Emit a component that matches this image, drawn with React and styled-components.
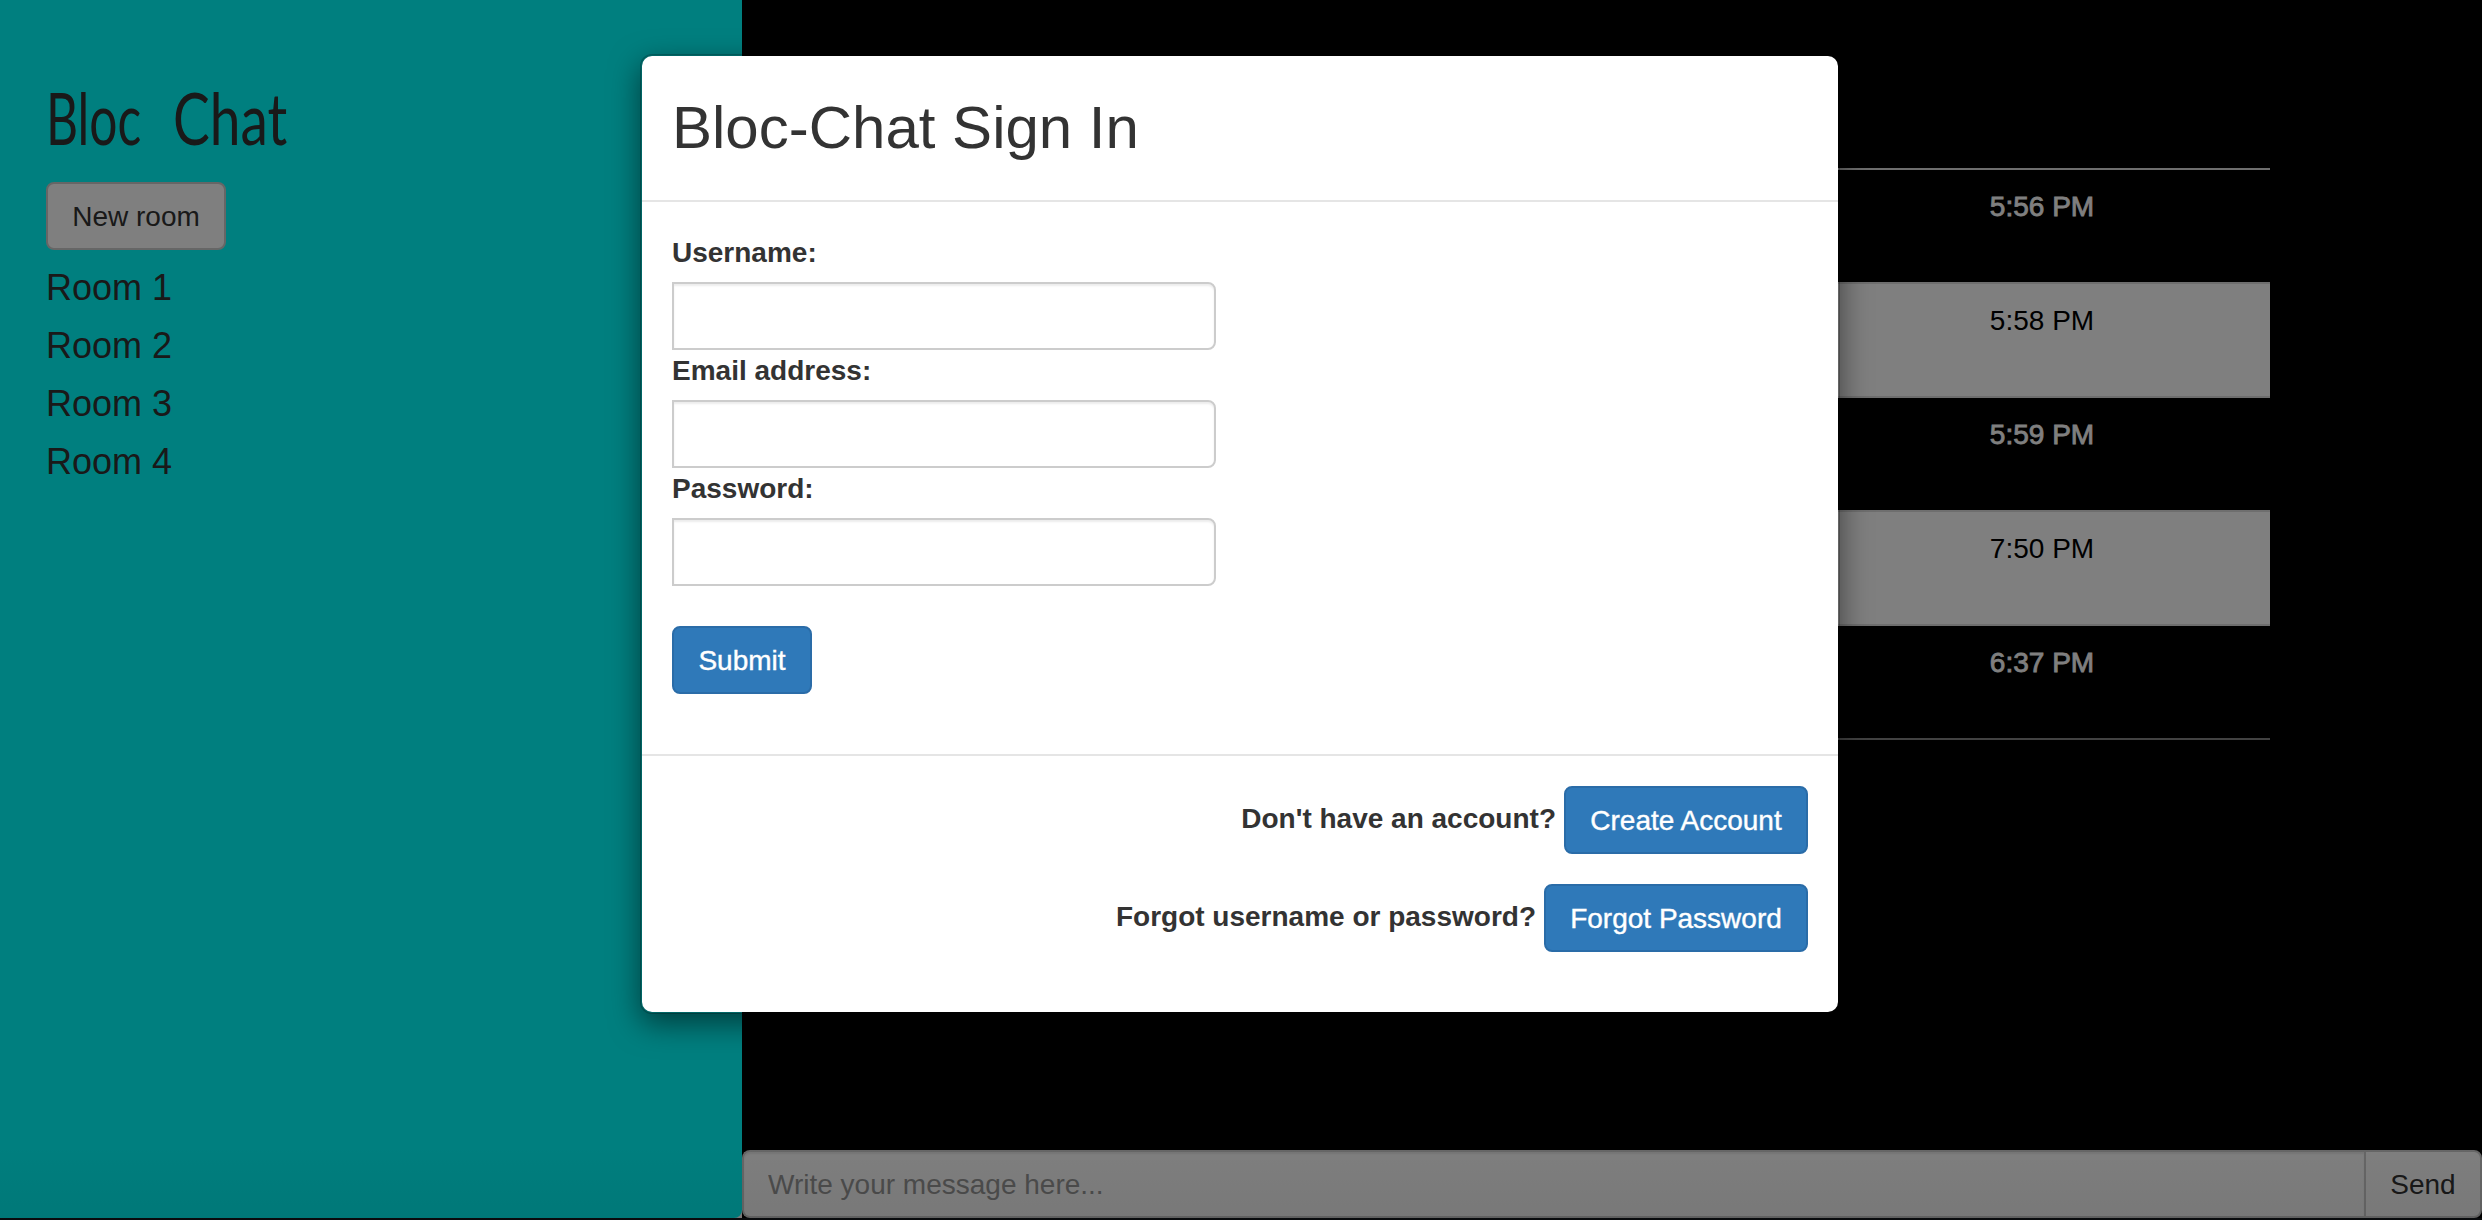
import React from 'react';
import styled, { createGlobalStyle } from 'styled-components';

const Global = createGlobalStyle`
  *, *::before, *::after { box-sizing: border-box; }
  html, body { margin: 0; background: #000; overflow: hidden; }
  body {
    font-family: "Liberation Sans", Arial, sans-serif;
    font-size: 28px;
    line-height: 40px;
    color: #333;
  }
`;

const Page = styled.div`
  position: relative;
  display: flex;
  flex-direction: column;
  height: 1220px;
  background: #14181c;
`;

const Shell = styled.div`
  display: flex;
  height: 1218px;
  background: #fff;
`;

const Sidebar = styled.aside`
  width: 742px;
  padding: 77px 46px 0;
  background: #0ff;
  border-radius: 0 0 8px 0;
`;

const Brand = styled.h1`
  display: flex;
  margin: 0 0 25px;
  height: 80px;
  font: 400 72px/80px Lato, sans-serif;
  white-space: nowrap;
`;

const Word = styled.span`
  width: ${p => p.$width}px;
  transform: scaleX(${p => p.$scale});
  transform-origin: left center;
`;

const Button = styled.button`
  display: inline-block;
  height: 68px;
  padding: 13px 24px 11px;
  border: 2px solid ${p => (p.$primary ? '#2a6ca8' : '#ccc')};
  border-radius: 8px;
  background: ${p => (p.$primary ? '#2f79b9' : '#fff')};
  color: ${p => (p.$primary ? '#fff' : '#333')};
  font: inherit;
  white-space: nowrap;
  ${p => p.$primary && '-webkit-text-stroke: 0.4px currentColor;'}
  ${p => p.$width && `width: ${p.$width}px; padding-inline: 0;`}
`;

const Rooms = styled.ul`
  list-style: none;
  margin: 9px 0 0;
  padding: 0;
`;

const Room = styled.li`
  font-size: 36px;
  line-height: 58px;
`;

const Main = styled.main`
  display: flex;
  flex: 1;
  flex-direction: column;
  background: #000;
`;

const Messages = styled.div`
  flex: 1;
  margin: 168px 212px 0 150px;
`;

const Message = styled.div`
  display: grid;
  grid-template-columns: 1fr 456px;
  height: ${p => (p.$light ? 116 : 112)}px;
  padding-top: 17px;
  border: solid #ddd;
  border-width: ${p => (p.$light ? '2px 0' : '0')};
  background: ${p => (p.$light ? '#fff' : '#000')};
  color: ${p => (p.$light ? '#000' : '#fff')};
`;

const Time = styled.time`
  grid-column: 2;
  text-align: center;
  -webkit-text-stroke: ${p => (p.$bold ? '0.8px' : '0')} currentColor;
`;

const Rule = styled.div`
  height: 2px;
  background: ${p => p.$color};
`;

const Composer = styled.div`
  display: flex;
  height: 68px;
`;

const MessageInput = styled.input`
  flex: 1;
  min-width: 0;
  height: 68px;
  padding: 13px 24px 11px;
  border: 2px solid #ccc;
  border-right: 0;
  border-radius: 8px 0 0 8px;
  box-shadow: inset 0 2px 2px rgba(0, 0, 0, 0.075);
  background: #fff;
  font: inherit;
  &::placeholder { color: #999; opacity: 1; }
`;

const SendButton = styled(Button)`
  border-radius: 0 8px 8px 0;
`;

const Backdrop = styled.div`
  position: absolute;
  inset: 0;
  display: flex;
  justify-content: center;
  align-items: flex-start;
  padding: 54px 2px 0 0;
  background: linear-gradient(transparent 1145px, rgba(0, 0, 0, 0.06) 1220px), rgba(0, 0, 0, 0.5);
`;

const Dialog = styled.section`
  width: 1200px;
  height: 960px;
  border: 2px solid rgba(0, 0, 0, 0.2);
  border-radius: 12px;
  background: #fff;
  background-clip: padding-box;
  box-shadow: 0 10px 30px rgba(0, 0, 0, 0.5);
`;

const DialogHeader = styled.header`
  height: 146px;
  padding: 39px 30px 0;
  border-bottom: 2px solid #e5e5e5;
`;

const Title = styled.h2`
  margin: 0;
  font-size: 60px;
  line-height: 66px;
  font-weight: 400;
`;

const Form = styled.form`
  display: flex;
  flex-direction: column;
  align-items: flex-start;
  height: 552px;
  padding: 30px;
`;

const Label = styled.label`
  height: 50px;
  padding-top: 1px;
  font-weight: 700;
`;

const Field = styled.input`
  width: 544px;
  height: 68px;
  padding: 12px 24px;
  border: 2px solid #ccc;
  border-radius: 0 8px 8px 0;
  box-shadow: inset 0 2px 2px rgba(0, 0, 0, 0.075);
  background: #fff;
  font: inherit;
`;

const Submit = styled(Button)`
  margin-top: 40px;
`;

const DialogFooter = styled.footer`
  display: flex;
  flex-direction: column;
  gap: 30px;
  padding: 30px;
  border-top: 2px solid #e5e5e5;
`;

const Action = styled.div`
  display: flex;
  justify-content: flex-end;
  gap: 8px;
`;

const Prompt = styled.strong`
  line-height: 66px;
`;

const rooms = ['Room 1', 'Room 2', 'Room 3', 'Room 4'];
const times = ['5:56 PM', '5:58 PM', '5:59 PM', '7:50 PM', '6:37 PM'];
const fields = [['Username:', 'text'], ['Email address:', 'email'], ['Password:', 'password']];
const actions = [
  ["Don't have an account?", 'Create Account', 244],
  ['Forgot username or password?', 'Forgot Password', 264],
];

export default function App() {
  return (
    <>
      <Global />
      <Page>
        <Shell>
          <Sidebar>
            <Brand>
              <Word $width={127} $scale={0.69}>Bloc </Word>
              <Word $width={120} $scale={0.765}>Chat</Word>
            </Brand>
            <Button $width={180}>New room</Button>
            <Rooms>{rooms.map(r => <Room key={r}>{r}</Room>)}</Rooms>
          </Sidebar>
          <Main>
            <Messages>
              <Rule $color="#ddd" />
              {times.map((t, i) => (
                <Message key={t} $light={i % 2 === 1}>
                  <Time $bold={i % 2 === 0}>{t}</Time>
                </Message>
              ))}
              <Rule $color="#848484" />
            </Messages>
            <Composer>
              <MessageInput placeholder="Write your message here..." />
              <SendButton $width={118}>Send</SendButton>
            </Composer>
          </Main>
        </Shell>
        <Backdrop>
          <Dialog>
            <DialogHeader><Title>Bloc-Chat Sign In</Title></DialogHeader>
            <Form>
              {fields.map(([label, type]) => (
                <React.Fragment key={label}>
                  <Label htmlFor={type}>{label}</Label>
                  <Field id={type} type={type} />
                </React.Fragment>
              ))}
              <Submit type="button" $primary $width={140}>Submit</Submit>
            </Form>
            <DialogFooter>
              {actions.map(([text, button, width]) => (
                <Action key={button}>
                  <Prompt>{text}</Prompt>
                  <Button $primary $width={width}>{button}</Button>
                </Action>
              ))}
            </DialogFooter>
          </Dialog>
        </Backdrop>
      </Page>
    </>
  );
}
